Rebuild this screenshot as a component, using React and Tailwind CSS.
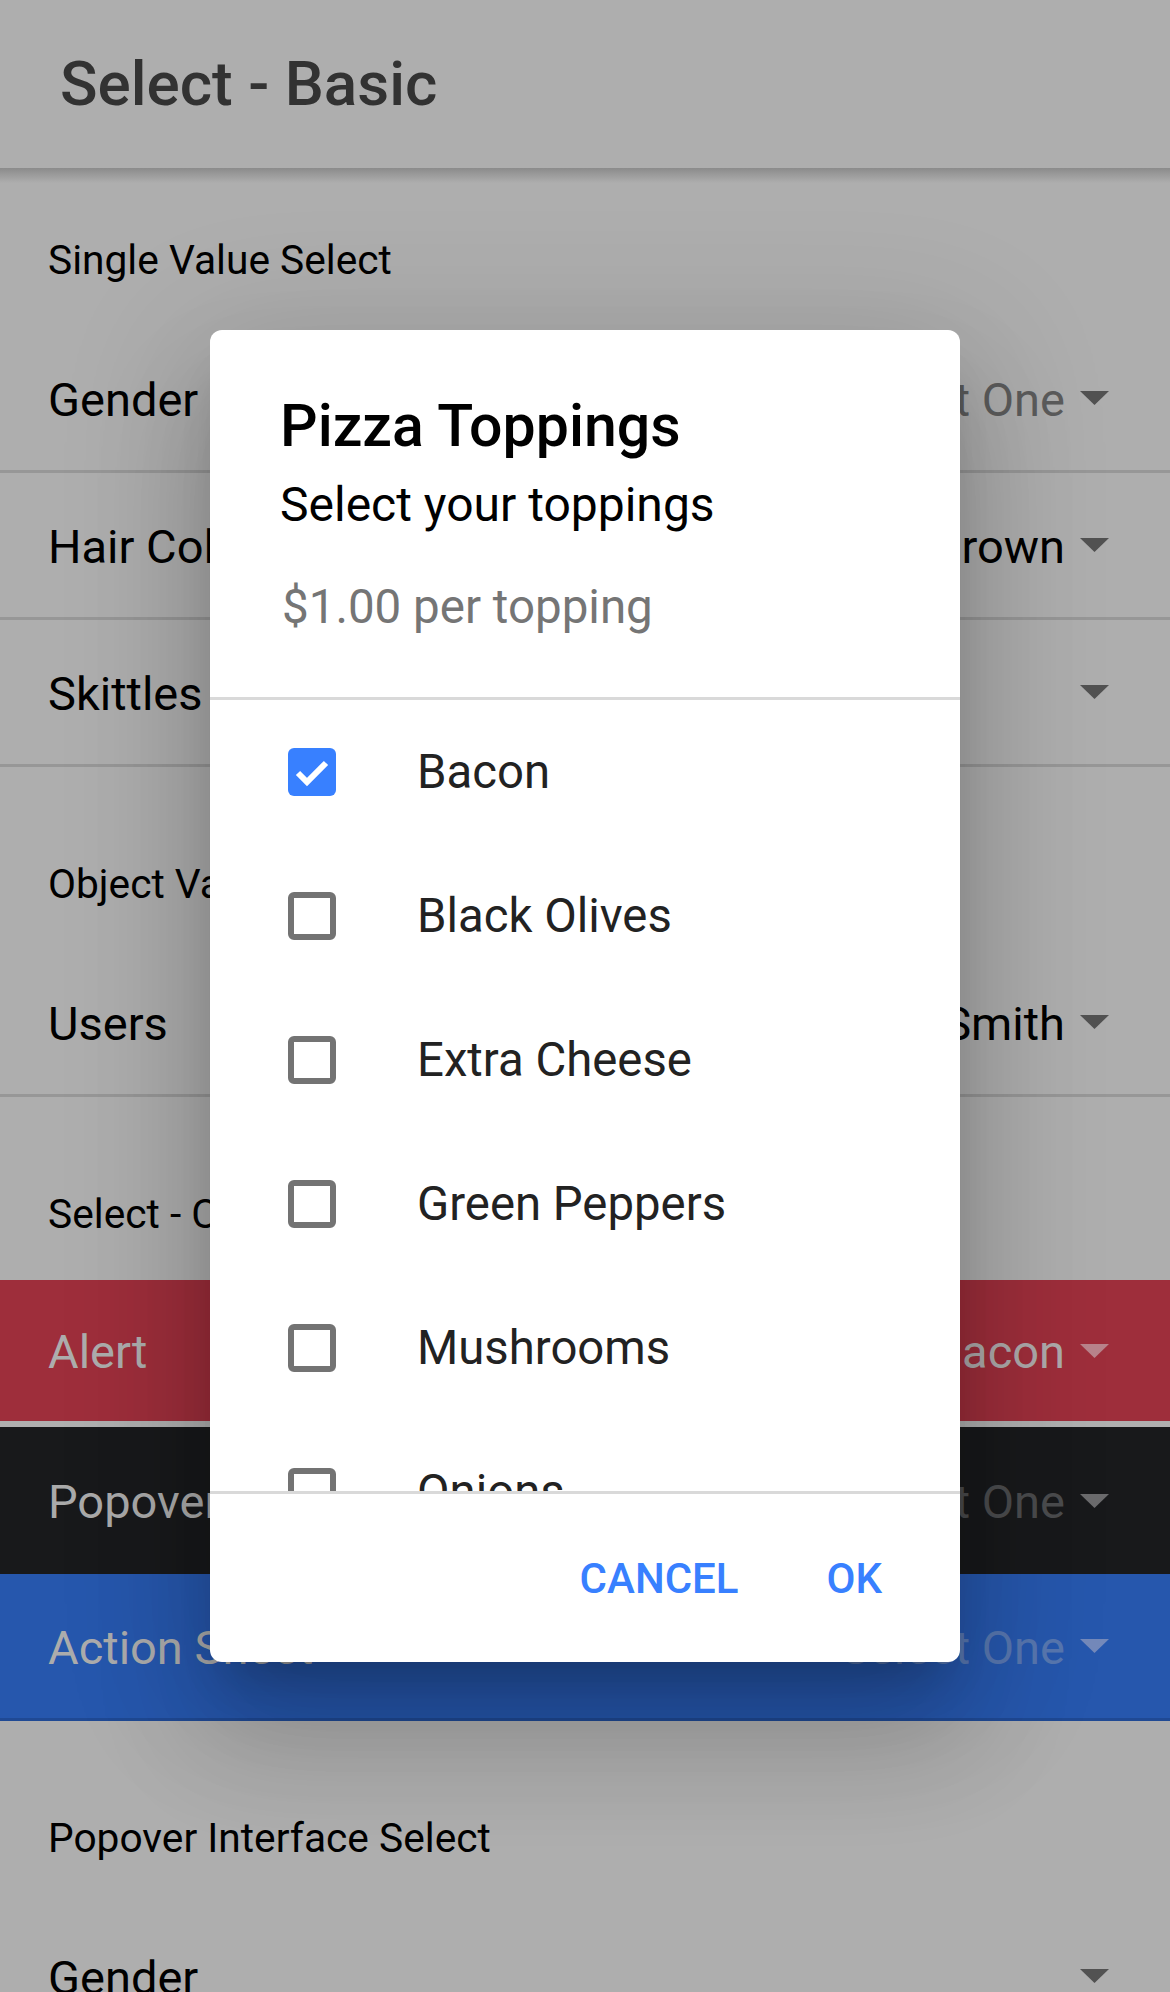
import React from 'react'

const toppings = [
  { name: 'Bacon', checked: true },
  { name: 'Black Olives' },
  { name: 'Extra Cheese' },
  { name: 'Green Peppers' },
  { name: 'Mushrooms' },
  { name: 'Onions' },
]

const variants = {
  plain: {
    row: 'h-[147px] border-b-[3px] border-[#979797]',
    label: 'text-black',
    value: 'text-black',
    placeholder: 'text-[#5c5c5c]',
    caret: '#525252',
  },
  danger: {
    row: 'h-[147px] bg-[#9e2e3b] border-b-[6px] border-[#b0b0b0]',
    label: 'text-[#adadad]',
    value: 'text-[#aeaaab]',
    placeholder: 'text-[#b07c84]',
    caret: '#b8838b',
  },
  dark: {
    row: 'h-[147px] bg-[#18191b]',
    label: 'text-[#aaaaaa]',
    value: 'text-[#aaaaaa]',
    placeholder: 'text-[#4b4c4e]',
    caret: '#6b6b6d',
  },
  primary: {
    row: 'h-[147px] bg-[#2657ad] border-b-[3px] border-[#1f4994]',
    label: 'text-[#acacac]',
    value: 'text-[#acacac]',
    placeholder: 'text-[#5877b0]',
    caret: '#7489ba',
  },
}

function Caret({ color }) {
  return (
    <svg width="29" height="14" viewBox="0 0 29 14" className="ml-[15px] shrink-0">
      <polygon points="0,0 29,0 14.5,14" fill={color} />
    </svg>
  )
}

function SelectRow({ label, value, variant = 'plain' }) {
  const v = variants[variant]
  return (
    <div className={`flex items-center pl-[48px] pr-[61px] ${v.row}`}>
      <div className={`flex-1 pt-[3px] text-[47px] leading-[56px] ${v.label}`}>{label}</div>
      {value !== undefined && (
        <div className={`pt-[3px] text-[47px] leading-[56px] ${value ? v.value : v.placeholder}`}>
          {value || 'Select One'}
        </div>
      )}
      <Caret color={v.caret} />
    </div>
  )
}

function ListHeader({ children, first }) {
  return (
    <div className={`${first ? 'pt-[68px]' : 'pt-[93px]'} pb-[42px] pl-[48px] text-[40.7px] leading-[48px] text-black`}>
      {children}
    </div>
  )
}

function Checkbox({ checked }) {
  if (checked) {
    return (
      <div className="w-[48px] h-[48px] rounded-[6px] bg-[#3880ff] shrink-0">
        <svg width="48" height="48" viewBox="0 0 48 48">
          <path d="M10 25 L19 34 L38 15" fill="none" stroke="white" strokeWidth="6" />
        </svg>
      </div>
    )
  }
  return <div className="w-[48px] h-[48px] rounded-[6px] border-[6px] border-[#737373] shrink-0" />
}

function ToppingsAlert() {
  return (
    <div className="absolute left-[210px] top-[330px] w-[750px] h-[1332px] bg-white rounded-[12px] overflow-hidden flex flex-col shadow-[0_33px_45px_-21px_rgba(0,0,0,0.2),0_72px_114px_9px_rgba(0,0,0,0.14),0_27px_138px_24px_rgba(0,0,0,0.12)]">
      <div className="h-[367px] shrink-0 pt-[64px] pl-[70px]">
        <div className="text-[59px] leading-[64px] font-medium text-black">Pizza Toppings</div>
        <div className="mt-[19px] text-[48px] leading-[56px] text-black">Select your toppings</div>
        <div className="mt-[48px] pl-[2px] text-[47.5px] leading-[52px] text-[#757575]">$1.00 per topping</div>
      </div>
      <div className="h-[797px] shrink-0 border-y-[3px] border-[#d9d9d9] overflow-hidden">
        {toppings.map(t => (
          <div key={t.name} className="h-[144px] flex items-center pl-[78px]">
            <Checkbox checked={t.checked} />
            <span className="ml-[81px] text-[47.3px] leading-[56px] text-[#222222]">{t.name}</span>
          </div>
        ))}
      </div>
      <div className="flex-1 flex items-center justify-end pr-[78px] gap-[88px] text-[42px] font-medium text-[#3880ff]">
        <span>CANCEL</span>
        <span>OK</span>
      </div>
    </div>
  )
}

export default function App() {
  return (
    <div className="relative w-full h-[1992px] overflow-hidden bg-[#aeaeae] font-['Roboto',sans-serif]">
      <div className="relative h-[168px] flex items-center pl-[60px]">
        <h1 className="text-[62px] leading-[70px] font-medium text-[#323232]">Select - Basic</h1>
        <div className="absolute left-0 right-0 top-full h-[15px] bg-linear-to-b from-[#8b8b8b] to-transparent" />
      </div>

      <section>
        <ListHeader first>Single Value Select</ListHeader>
        <SelectRow label="Gender" value="" />
        <SelectRow label="Hair Color" value="Brown" />
        <SelectRow label="Skittles" />
      </section>

      <section>
        <ListHeader>Object Value Select</ListHeader>
        <SelectRow label="Users" value="Alice Smith" />
      </section>

      <section>
        <ListHeader>Select - Custom Interface Options</ListHeader>
        <SelectRow label="Alert" value="Bacon" variant="danger" />
        <SelectRow label="Popover" value="" variant="dark" />
        <SelectRow label="Action Sheet" value="" variant="primary" />
      </section>

      <section>
        <ListHeader>Popover Interface Select</ListHeader>
        <SelectRow label="Gender" />
      </section>

      <ToppingsAlert />
    </div>
  )
}
